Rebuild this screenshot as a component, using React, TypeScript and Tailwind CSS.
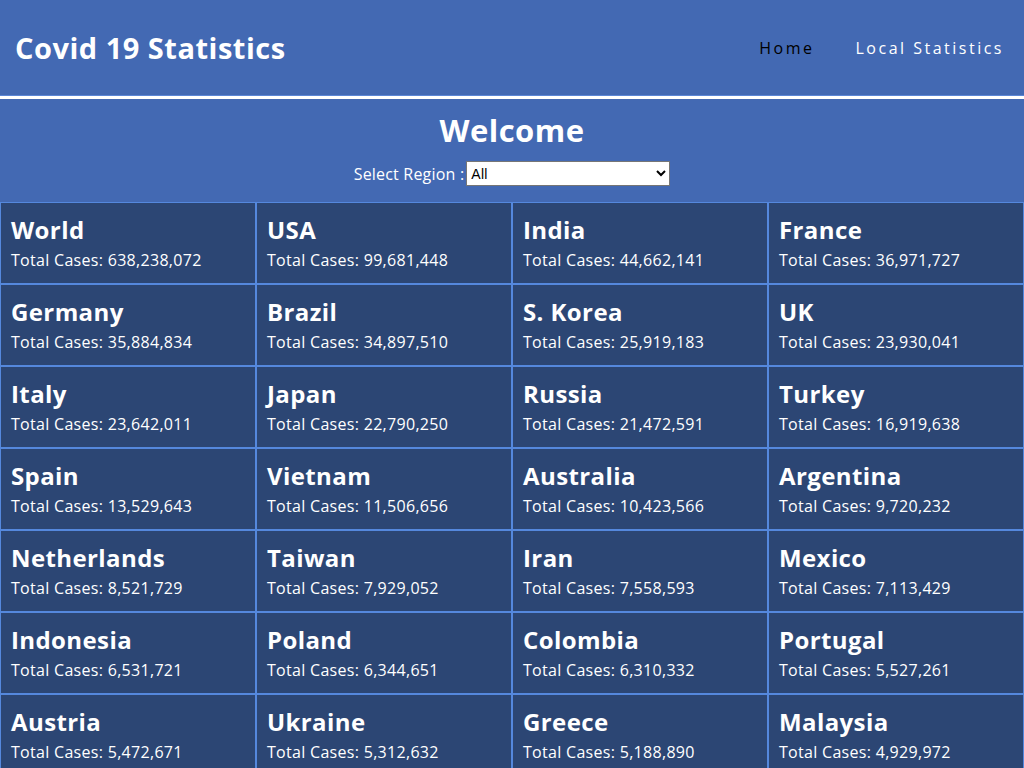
import React from "react"

const countries = [
  { name: "World", total: "638,238,072" },
  { name: "USA", total: "99,681,448" },
  { name: "India", total: "44,662,141" },
  { name: "France", total: "36,971,727" },
  { name: "Germany", total: "35,884,834" },
  { name: "Brazil", total: "34,897,510" },
  { name: "S. Korea", total: "25,919,183" },
  { name: "UK", total: "23,930,041" },
  { name: "Italy", total: "23,642,011" },
  { name: "Japan", total: "22,790,250" },
  { name: "Russia", total: "21,472,591" },
  { name: "Turkey", total: "16,919,638" },
  { name: "Spain", total: "13,529,643" },
  { name: "Vietnam", total: "11,506,656" },
  { name: "Australia", total: "10,423,566" },
  { name: "Argentina", total: "9,720,232" },
  { name: "Netherlands", total: "8,521,729" },
  { name: "Taiwan", total: "7,929,052" },
  { name: "Iran", total: "7,558,593" },
  { name: "Mexico", total: "7,113,429" },
  { name: "Indonesia", total: "6,531,721" },
  { name: "Poland", total: "6,344,651" },
  { name: "Colombia", total: "6,310,332" },
  { name: "Portugal", total: "5,527,261" },
  { name: "Austria", total: "5,472,671" },
  { name: "Ukraine", total: "5,312,632" },
  { name: "Greece", total: "5,188,890" },
  { name: "Malaysia", total: "4,929,972" },
]

export default function App() {
  return (
    <div className="min-h-screen bg-[#4369b3] font-['Open_Sans',sans-serif] text-white">
      <header className="h-[95px] flex items-center justify-between px-[15px]">
        <h1 className="text-[29px] font-bold tracking-[0.5px]">Covid 19 Statistics</h1>
        <nav className="flex items-center gap-[41px] pr-[5px] text-[16px] tracking-[2.5px]">
          <a className="text-black">Home</a>
          <a className="text-white">Local Statistics</a>
        </nav>
      </header>
      <div className="h-px bg-[#5b86d6]" />
      <div className="h-[3px] bg-white" />

      <section className="pt-[12px] flex flex-col items-center">
        <h2 className="text-[31px] font-bold leading-[38px] tracking-[0.5px]">Welcome</h2>
        <div className="mt-[12px] flex items-center text-[16px] tracking-[0.2px]">
          <label className="mr-[2px]">Select Region :</label>
          <select className="w-[204px] h-[25px] bg-white text-black text-[14px] border border-[#767676] font-['Liberation_Sans',sans-serif]">
            <option>All</option>
            <option>Asia</option>
            <option>Europe</option>
            <option>Africa</option>
            <option>North America</option>
            <option>South America</option>
            <option>Oceania</option>
          </select>
        </div>
      </section>

      <div className="mt-[16px] grid grid-cols-4">
        {countries.map((c) => (
          <div key={c.name} className="h-[82px] bg-[#2c4674] border border-[#5588dd] px-[10px] pt-[10px]">
            <h3 className="text-[24px] font-bold leading-[34px] tracking-[0.4px]">{c.name}</h3>
            <p className="mt-[1px] text-[16px] leading-[24px] tracking-[0.3px]">Total Cases: {c.total}</p>
          </div>
        ))}
      </div>
    </div>
  )
}
